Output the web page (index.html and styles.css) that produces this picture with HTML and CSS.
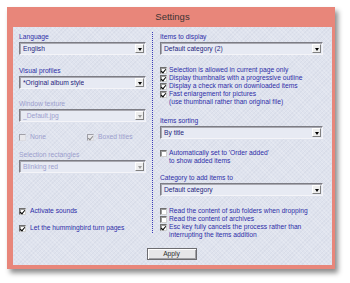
FILE: index.html
```html
<!DOCTYPE html>
<html lang="en">
<head>
    <meta charset="UTF-8">
    <title>Settings</title>
    <link rel="stylesheet" href="styles.css">
</head>
<body>
    <div class="settings-window">
        <div class="title-bar">Settings</div>

        <div class="panel">
            <div class="columns">
                <div class="col col-left">
                    <div class="field field-language">
                        <div class="label">Language</div>
                        <div class="combo">
                            <span class="combo-value">English</span>
                            <span class="combo-btn"></span>
                        </div>
                    </div>

                    <div class="field field-profiles">
                        <div class="label">Visual profiles</div>
                        <div class="combo">
                            <span class="combo-value">*Original album style</span>
                            <span class="combo-btn"></span>
                        </div>
                    </div>

                    <div class="field field-texture disabled">
                        <div class="label">Window texture</div>
                        <div class="combo">
                            <span class="combo-value">_Default.jpg</span>
                            <span class="combo-btn"></span>
                        </div>
                    </div>

                    <div class="check-pair disabled">
                        <label class="check wide">
                            <span class="box"></span>
                            <span class="check-text">None</span>
                        </label>
                        <label class="check wide">
                            <span class="box checked"></span>
                            <span class="check-text">Boxed titles</span>
                        </label>
                    </div>

                    <div class="field field-rectangles disabled">
                        <div class="label">Selection rectangles</div>
                        <div class="combo">
                            <span class="combo-value">Blinking red</span>
                            <span class="combo-btn"></span>
                        </div>
                    </div>

                    <label class="check wide check-sounds">
                        <span class="box checked"></span>
                        <span class="check-text">Activate sounds</span>
                    </label>
                    <label class="check wide check-pages">
                        <span class="box checked"></span>
                        <span class="check-text">Let the hummingbird turn pages</span>
                    </label>
                </div>

                <div class="separator"></div>

                <div class="col col-right">
                    <div class="field">
                        <div class="label">Items to display</div>
                        <div class="combo">
                            <span class="combo-value">Default category (2)</span>
                            <span class="combo-btn"></span>
                        </div>
                    </div>

                    <div class="check-list list-display">
                        <label class="check">
                            <span class="box checked"></span>
                            <span class="check-text">Selection is allowed in current page only</span>
                        </label>
                        <label class="check">
                            <span class="box checked"></span>
                            <span class="check-text">Display thumbnails with a progressive outline</span>
                        </label>
                        <label class="check">
                            <span class="box checked"></span>
                            <span class="check-text">Display a check mark on downloaded items</span>
                        </label>
                        <label class="check">
                            <span class="box checked"></span>
                            <span class="check-text">Fast enlargement for pictures<br>(use thumbnail rather than original file)</span>
                        </label>
                    </div>

                    <div class="field field-sorting">
                        <div class="label">Items sorting</div>
                        <div class="combo">
                            <span class="combo-value">By title</span>
                            <span class="combo-btn"></span>
                        </div>
                    </div>

                    <label class="check check-auto">
                        <span class="box"></span>
                        <span class="check-text">Automatically set to 'Order added'<br>to show added items</span>
                    </label>

                    <div class="field field-category">
                        <div class="label">Category to add items to</div>
                        <div class="combo">
                            <span class="combo-value">Default category</span>
                            <span class="combo-btn"></span>
                        </div>
                    </div>

                    <div class="check-list list-reading">
                        <label class="check">
                            <span class="box"></span>
                            <span class="check-text">Read the content of sub folders when dropping</span>
                        </label>
                        <label class="check">
                            <span class="box"></span>
                            <span class="check-text">Read the content of archives</span>
                        </label>
                        <label class="check">
                            <span class="box checked"></span>
                            <span class="check-text">Esc key fully cancels the process rather than<br>interrupting the items addition</span>
                        </label>
                    </div>
                </div>
            </div>

            <div class="actions">
                <button class="apply-button">Apply</button>
            </div>
        </div>
    </div>
</body>
</html>
```

FILE: styles.css
```css
* {
    margin: 0;
    padding: 0;
    box-sizing: border-box;
}

html, body {
    height: 100%;
    overflow: hidden;
}

body {
    font-family: "Liberation Sans", Arial, sans-serif;
    font-size: 6.7px;
    line-height: 8px;
    color: #2e2ea8;
    background-color: #ffffff;
    padding: 7px 0 0 7px;
}

.settings-window {
    width: 328px;
    height: 262px;
    background-color: #e8867a;
    padding: 0 3px 4px 6px;
    box-shadow: 3px 4px 5px rgba(0, 0, 0, 0.45);
    display: flex;
    flex-direction: column;
}

.title-bar {
    height: 20px;
    line-height: 20px;
    text-align: center;
    font-size: 9.5px;
    color: #3a3434;
    flex-shrink: 0;
}

.panel {
    flex: 1;
    background-color: #dfe3ee;
    background-image:
        repeating-linear-gradient(45deg, rgba(255, 255, 255, 0.18) 0 1px, transparent 1px 3px),
        repeating-linear-gradient(-45deg, rgba(90, 100, 130, 0.05) 0 1px, transparent 1px 3px);
    padding: 6px 8px 0 6px;
    display: flex;
    flex-direction: column;
}

.columns {
    display: grid;
    grid-template-columns: 127px 1px 164px;
    column-gap: 6px;
}

.columns .col-right {
    margin-left: 1px;
}

.col {
    display: flex;
    flex-direction: column;
}

.separator {
    border-left: 1px dotted #3b3bb8;
    margin-top: -1px;
    margin-bottom: 6px;
}

.label {
    height: 8px;
    white-space: nowrap;
}

.combo {
    position: relative;
    margin-top: 1px;
    height: 13px;
    background-color: #e7eaf3;
    border: 1px solid;
    border-color: #7c7c84 #f4f4f8 #f4f4f8 #7c7c84;
    box-shadow: inset 1px 1px 0 #a8a8b0;
    display: flex;
    align-items: center;
    padding-left: 3px;
    color: #1f1f7c;
}

.combo-value {
    white-space: nowrap;
    overflow: hidden;
}

.combo-btn {
    position: absolute;
    right: 1px;
    top: 1px;
    width: 9px;
    height: 9px;
    background-color: #eeeeee;
    border: 1px solid;
    border-color: #ffffff #808080 #808080 #ffffff;
}

.combo-btn::after {
    content: "";
    position: absolute;
    left: 1.5px;
    top: 2.5px;
    border-left: 2.5px solid transparent;
    border-right: 2.5px solid transparent;
    border-top: 3px solid #000000;
}

.disabled {
    color: #9c9ecd;
}

.disabled .combo {
    color: #9c9ecd;
}

.disabled .combo-btn::after {
    border-top-color: #9a9a9a;
}

.field-profiles { margin-top: 12px; }
.field-texture { margin-top: 11px; }
.field-rectangles { margin-top: 10px; }
.field-sorting { margin-top: 11px; }
.field-category { margin-top: 9px; }

.check {
    display: flex;
    align-items: flex-start;
    gap: 2px;
    white-space: nowrap;
}

.check.wide {
    gap: 4px;
}

.box {
    position: relative;
    width: 7px;
    height: 7px;
    margin-top: 0.5px;
    flex-shrink: 0;
    background-color: #ffffff;
    border: 1px solid;
    border-color: #6e6e6e #d0d0d0 #d0d0d0 #6e6e6e;
    box-shadow: inset 1px 1px 0 #9a9a9a;
}

.box.checked::after {
    content: "";
    position: absolute;
    left: 1px;
    top: 0;
    width: 2px;
    height: 4px;
    border-right: 1.5px solid #000000;
    border-bottom: 1.5px solid #000000;
    transform: rotate(40deg);
}

.disabled .box {
    background-color: #e8e8ec;
    border-color: #a0a0a8 #dcdce2 #dcdce2 #a0a0a8;
    box-shadow: none;
}

.disabled .box.checked::after {
    border-color: #8a8a8a;
}

.check-pair {
    margin-top: 11px;
    display: grid;
    grid-template-columns: 68px auto;
}

.check-sounds { margin-top: 34px; }
.check-pages { margin-top: 9px; }

.check-list {
    display: flex;
    flex-direction: column;
}

.list-display { margin-top: 11px; }
.check-auto { margin-top: 10px; }
.list-reading { margin-top: 11px; }

.actions {
    display: flex;
    justify-content: center;
    margin-top: 9px;
}

.apply-button {
    width: 50px;
    height: 12px;
    font-family: "Liberation Sans", Arial, sans-serif;
    font-size: 6.7px;
    line-height: 8px;
    color: #2a2a2a;
    background-color: #e6e6e8;
    border: 1px solid #6c6c70;
    box-shadow: inset 1px 1px 0 #ffffff, inset -1px -1px 0 #a0a0a4;
}
```
